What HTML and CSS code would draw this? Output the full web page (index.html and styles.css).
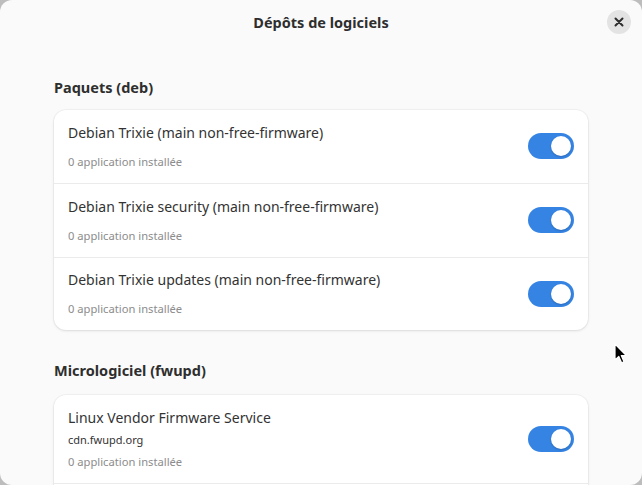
FILE: index.html
```html
<!DOCTYPE html>
<html lang="fr">
<head>
<meta charset="utf-8">
<title>Dépôts de logiciels</title>
<link rel="stylesheet" href="styles.css">
</head>
<body>
<div class="window">
  <header class="headerbar">
    <div></div>
    <h1 class="title">Dépôts de logiciels</h1>
    <button class="close" aria-label="Fermer">
      <svg width="10" height="10" viewBox="0 0 10 10"><path d="M1.5 1.5 L8.5 8.5 M8.5 1.5 L1.5 8.5" stroke="#2e2e2e" stroke-width="2" stroke-linecap="round"/></svg>
    </button>
  </header>
  <main class="content">
    <h2 class="section-title first">Paquets (deb)</h2>
    <div class="card">
      <div class="row">
        <div class="labels">
          <div class="row-title">Debian Trixie (main non-free-firmware)</div>
          <div class="row-sub">0 application installée</div>
        </div>
        <div class="switch"><div class="knob"></div></div>
      </div>
      <div class="row">
        <div class="labels">
          <div class="row-title">Debian Trixie security (main non-free-firmware)</div>
          <div class="row-sub">0 application installée</div>
        </div>
        <div class="switch"><div class="knob"></div></div>
      </div>
      <div class="row last">
        <div class="labels">
          <div class="row-title">Debian Trixie updates (main non-free-firmware)</div>
          <div class="row-sub">0 application installée</div>
        </div>
        <div class="switch"><div class="knob"></div></div>
      </div>
    </div>
    <h2 class="section-title">Micrologiciel (fwupd)</h2>
    <div class="card">
      <div class="row tall">
        <div class="labels">
          <div class="row-title">Linux Vendor Firmware Service</div>
          <div class="row-url">cdn.fwupd.org</div>
          <div class="row-sub tight">0 application installée</div>
        </div>
        <div class="switch"><div class="knob"></div></div>
      </div>
      <div class="row last"></div>
    </div>
  </main>
  <svg class="cursor" width="14" height="22" viewBox="0 0 14 22"><path d="M1 1 L1 17 L4.8 13.4 L7.6 19.8 L10 18.8 L7.3 12.5 L12.3 12.5 Z" fill="#000" stroke="#fff" stroke-width="1.2" stroke-linejoin="round"/></svg>
</div>
</body>
</html>
```

FILE: styles.css
```css
* { box-sizing: border-box; }
html, body {
  margin: 0;
  padding: 0;
  height: 100%;
  background: #bdbdbd;
  overflow: hidden;
}
.window {
  position: relative;
  width: 642px;
  height: 485px;
  background: #fafafa;
  border-radius: 12px;
  overflow: hidden;
  font-family: "Noto Sans", "Open Sans", sans-serif;
  color: #2e2e2e;
}
.headerbar {
  display: grid;
  grid-template-columns: 1fr auto 1fr;
  align-items: center;
  height: 44px;
}
.title {
  margin: 0;
  font-size: 14.5px;
  font-weight: 700;
  color: #2e2e2e;
  line-height: 20px;
}
.close {
  justify-self: end;
  margin-right: 11px;
  width: 24px;
  height: 24px;
  border-radius: 50%;
  border: none;
  background: #e3e3e3;
  padding: 0;
  display: flex;
  align-items: center;
  justify-content: center;
}
.content {
  padding: 0 54px;
}
.section-title {
  margin: 30px 0 15px;
  font-size: 14.5px;
  font-weight: 700;
  line-height: 20px;
  color: #2e2e2e;
}
.section-title.first {
  margin-top: 33px;
  margin-bottom: 13px;
}
.card {
  background: #ffffff;
  border-radius: 12px;
  box-shadow: 0 0 0 1px rgba(0,0,0,0.03), 0 1px 3px rgba(0,0,0,0.1);
  overflow: hidden;
}
.row {
  display: flex;
  align-items: center;
  justify-content: space-between;
  height: 74px;
  padding: 0 14px;
  border-bottom: 1px solid #ebebeb;
}
.row.last { border-bottom: none; height: 72px; }
.row.tall { height: 89px; }
.labels {
  display: flex;
  flex-direction: column;
  margin-top: -1px;
}
.row-title {
  font-size: 14px;
  line-height: 20px;
  color: #333333;
}
.row-sub {
  margin-top: 11px;
  font-size: 11.2px;
  line-height: 16px;
  color: #8c8c8c;
}
.row-url {
  margin-top: 4px;
  font-size: 11px;
  line-height: 16px;
  color: #333333;
}
.row-sub.tight { margin-top: 6px; }
.switch {
  width: 46px;
  height: 26px;
  border-radius: 13px;
  background: #3584e4;
  display: flex;
  align-items: center;
  justify-content: flex-end;
  padding: 0 3px;
  margin-top: -1px;
}
.knob {
  width: 20px;
  height: 20px;
  border-radius: 50%;
  background: #ffffff;
  box-shadow: 0 1px 2px rgba(0,0,0,0.2);
}
.cursor {
  position: absolute;
  left: 614px;
  top: 343px;
}
```
